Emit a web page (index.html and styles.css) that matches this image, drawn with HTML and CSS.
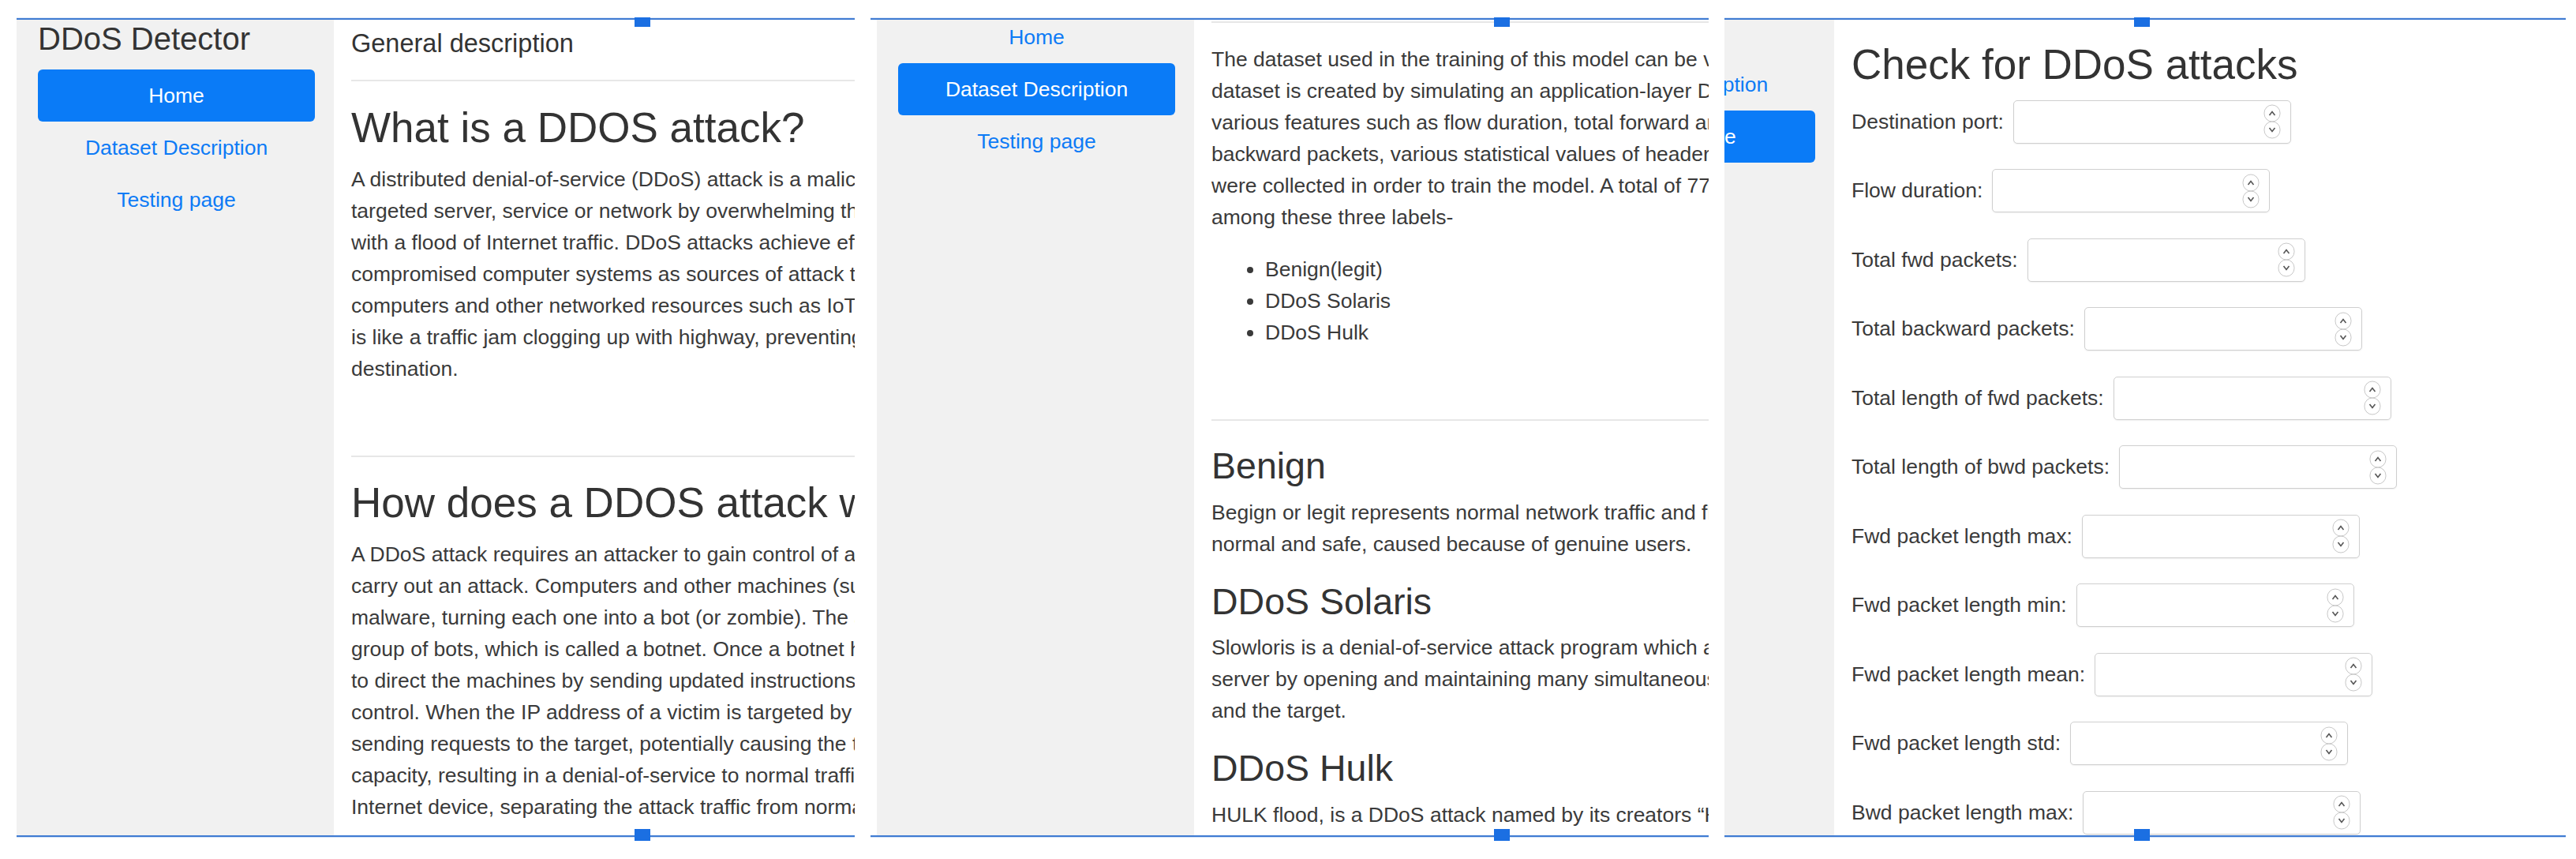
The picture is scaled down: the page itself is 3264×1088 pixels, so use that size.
FILE: index.html
```html
<!DOCTYPE html>
<html lang="en">
<head>
<meta charset="utf-8">
<title>DDoS Detector</title>
<link rel="stylesheet" href="styles.css">
</head>
<body>
<div class="canvas">

  <!-- Panel 1: Home -->
  <div class="frame f1">
    <div class="viewport">
      <div class="page">
        <aside class="sidebar">
          <div class="brand">DDoS Detector</div>
          <nav class="nav">
            <a class="active" href="#">Home</a>
            <a href="#">Dataset Description</a>
            <a href="#">Testing page</a>
          </nav>
        </aside>
        <main class="main">
          <h5 class="pagehead">General description</h5>
          <hr class="rule">
          <h2 class="title">What is a DDOS attack?</h2>
          <p>A distributed denial-of-service (DDoS) attack is a malicious attempt to disrupt the normal traffic of a<br>targeted server, service or network by overwhelming the target or its surrounding infrastructure<br>with a flood of Internet traffic. DDoS attacks achieve effectiveness by utilizing multiple<br>compromised computer systems as sources of attack traffic. Exploited machines can include<br>computers and other networked resources such as IoT devices. From a high level, a DDoS attack<br>is like a traffic jam clogging up with highway, preventing regular traffic from arriving at its desired<br>destination.</p>
          <hr class="rule sep">
          <h2 class="title">How does a DDOS attack work?</h2>
          <p>A DDoS attack requires an attacker to gain control of a network of online machines in order to<br>carry out an attack. Computers and other machines (such as IoT devices) are infected with<br>malware, turning each one into a bot (or zombie). The attacker then has remote control over the<br>group of bots, which is called a botnet. Once a botnet has been established, the attacker is able<br>to direct the machines by sending updated instructions to each bot via a method of remote<br>control. When the IP address of a victim is targeted by the botnet, each bot will respond by<br>sending requests to the target, potentially causing the targeted server or network to overflow<br>capacity, resulting in a denial-of-service to normal traffic. Because each bot is a legitimate<br>Internet device, separating the attack traffic from normal traffic can be difficult.</p>
        </main>
      </div>
    </div>
    <div class="handle h-top"></div>
    <div class="handle h-bot"></div>
  </div>

  <!-- Panel 2: Dataset Description -->
  <div class="frame f2">
    <div class="viewport">
      <div class="page">
        <aside class="sidebar">
          <div class="brand">DDoS Detector</div>
          <nav class="nav">
            <a href="#">Home</a>
            <a class="active" href="#">Dataset Description</a>
            <a href="#">Testing page</a>
          </nav>
        </aside>
        <main class="main">
          <h5 class="pagehead">Dataset description</h5>
          <hr class="rule">
          <p class="lead-p">The dataset used in the training of this model can be viewed here. This<br>dataset is created by simulating an application-layer DDoS attack on a web server, where<br>various features such as flow duration, total forward and<br>backward packets, various statistical values of header lengths and packet sizes<br>were collected in order to train the model. A total of 77 features are distributed<br>among these three labels-</p>
          <ul class="labels">
            <li>Benign(legit)</li>
            <li>DDoS Solaris</li>
            <li>DDoS Hulk</li>
          </ul>
          <hr class="rule sep sep-sub">
          <h3 class="sub">Benign</h3>
          <p>Begign or legit represents normal network traffic and flow of requests, which is considered<br>normal and safe, caused because of genuine users.</p>
          <h3 class="sub">DDoS Solaris</h3>
          <p>Slowloris is a denial-of-service attack program which allows an attacker to overwhelm a targeted<br>server by opening and maintaining many simultaneous HTTP connections between the attacker<br>and the target.</p>
          <h3 class="sub">DDoS Hulk</h3>
          <p>HULK flood, is a DDoS attack named by its creators “HTTP Unbearable Load King”.</p>
        </main>
      </div>
    </div>
    <div class="handle h-top"></div>
    <div class="handle h-bot"></div>
  </div>

  <!-- Panel 3: Testing page -->
  <div class="frame f3">
    <div class="viewport">
      <div class="page">
        <aside class="sidebar">
          <div class="brand">DDoS Detector</div>
          <nav class="nav">
            <a href="#">Home</a>
            <a href="#">Dataset Description</a>
            <a class="active" href="#">Testing page</a>
          </nav>
        </aside>
        <main class="main">
          <h5 class="pagehead">Testing page</h5>
          <hr class="rule">
          <h2 class="title">Check for DDoS attacks</h2>
          <form class="form">
            <div class="row"><label for="i1">Destination port:</label><span class="num"><input id="i1" type="text"><svg class="spin" viewBox="0 0 22 44" width="22" height="44"><rect x="1" y="1" width="20" height="21" rx="10" fill="none" stroke="#c8c8c8"/><rect x="1" y="22" width="20" height="21" rx="10" fill="none" stroke="#c8c8c8"/><path d="M7.5 14 L11 9.5 L14.5 14" fill="none" stroke="#555" stroke-width="1.6"/><path d="M7.5 30 L11 34.5 L14.5 30" fill="none" stroke="#555" stroke-width="1.6"/></svg></span></div>
            <div class="row"><label for="i2">Flow duration:</label><span class="num"><input id="i2" type="text"><svg class="spin" viewBox="0 0 22 44" width="22" height="44"><rect x="1" y="1" width="20" height="21" rx="10" fill="none" stroke="#c8c8c8"/><rect x="1" y="22" width="20" height="21" rx="10" fill="none" stroke="#c8c8c8"/><path d="M7.5 14 L11 9.5 L14.5 14" fill="none" stroke="#555" stroke-width="1.6"/><path d="M7.5 30 L11 34.5 L14.5 30" fill="none" stroke="#555" stroke-width="1.6"/></svg></span></div>
            <div class="row"><label for="i3">Total fwd packets:</label><span class="num"><input id="i3" type="text"><svg class="spin" viewBox="0 0 22 44" width="22" height="44"><rect x="1" y="1" width="20" height="21" rx="10" fill="none" stroke="#c8c8c8"/><rect x="1" y="22" width="20" height="21" rx="10" fill="none" stroke="#c8c8c8"/><path d="M7.5 14 L11 9.5 L14.5 14" fill="none" stroke="#555" stroke-width="1.6"/><path d="M7.5 30 L11 34.5 L14.5 30" fill="none" stroke="#555" stroke-width="1.6"/></svg></span></div>
            <div class="row"><label for="i4">Total backward packets:</label><span class="num"><input id="i4" type="text"><svg class="spin" viewBox="0 0 22 44" width="22" height="44"><rect x="1" y="1" width="20" height="21" rx="10" fill="none" stroke="#c8c8c8"/><rect x="1" y="22" width="20" height="21" rx="10" fill="none" stroke="#c8c8c8"/><path d="M7.5 14 L11 9.5 L14.5 14" fill="none" stroke="#555" stroke-width="1.6"/><path d="M7.5 30 L11 34.5 L14.5 30" fill="none" stroke="#555" stroke-width="1.6"/></svg></span></div>
            <div class="row"><label for="i5">Total length of fwd packets:</label><span class="num"><input id="i5" type="text"><svg class="spin" viewBox="0 0 22 44" width="22" height="44"><rect x="1" y="1" width="20" height="21" rx="10" fill="none" stroke="#c8c8c8"/><rect x="1" y="22" width="20" height="21" rx="10" fill="none" stroke="#c8c8c8"/><path d="M7.5 14 L11 9.5 L14.5 14" fill="none" stroke="#555" stroke-width="1.6"/><path d="M7.5 30 L11 34.5 L14.5 30" fill="none" stroke="#555" stroke-width="1.6"/></svg></span></div>
            <div class="row"><label for="i6">Total length of bwd packets:</label><span class="num"><input id="i6" type="text"><svg class="spin" viewBox="0 0 22 44" width="22" height="44"><rect x="1" y="1" width="20" height="21" rx="10" fill="none" stroke="#c8c8c8"/><rect x="1" y="22" width="20" height="21" rx="10" fill="none" stroke="#c8c8c8"/><path d="M7.5 14 L11 9.5 L14.5 14" fill="none" stroke="#555" stroke-width="1.6"/><path d="M7.5 30 L11 34.5 L14.5 30" fill="none" stroke="#555" stroke-width="1.6"/></svg></span></div>
            <div class="row"><label for="i7">Fwd packet length max:</label><span class="num"><input id="i7" type="text"><svg class="spin" viewBox="0 0 22 44" width="22" height="44"><rect x="1" y="1" width="20" height="21" rx="10" fill="none" stroke="#c8c8c8"/><rect x="1" y="22" width="20" height="21" rx="10" fill="none" stroke="#c8c8c8"/><path d="M7.5 14 L11 9.5 L14.5 14" fill="none" stroke="#555" stroke-width="1.6"/><path d="M7.5 30 L11 34.5 L14.5 30" fill="none" stroke="#555" stroke-width="1.6"/></svg></span></div>
            <div class="row"><label for="i8">Fwd packet length min:</label><span class="num"><input id="i8" type="text"><svg class="spin" viewBox="0 0 22 44" width="22" height="44"><rect x="1" y="1" width="20" height="21" rx="10" fill="none" stroke="#c8c8c8"/><rect x="1" y="22" width="20" height="21" rx="10" fill="none" stroke="#c8c8c8"/><path d="M7.5 14 L11 9.5 L14.5 14" fill="none" stroke="#555" stroke-width="1.6"/><path d="M7.5 30 L11 34.5 L14.5 30" fill="none" stroke="#555" stroke-width="1.6"/></svg></span></div>
            <div class="row"><label for="i9">Fwd packet length mean:</label><span class="num"><input id="i9" type="text"><svg class="spin" viewBox="0 0 22 44" width="22" height="44"><rect x="1" y="1" width="20" height="21" rx="10" fill="none" stroke="#c8c8c8"/><rect x="1" y="22" width="20" height="21" rx="10" fill="none" stroke="#c8c8c8"/><path d="M7.5 14 L11 9.5 L14.5 14" fill="none" stroke="#555" stroke-width="1.6"/><path d="M7.5 30 L11 34.5 L14.5 30" fill="none" stroke="#555" stroke-width="1.6"/></svg></span></div>
            <div class="row"><label for="i10">Fwd packet length std:</label><span class="num"><input id="i10" type="text"><svg class="spin" viewBox="0 0 22 44" width="22" height="44"><rect x="1" y="1" width="20" height="21" rx="10" fill="none" stroke="#c8c8c8"/><rect x="1" y="22" width="20" height="21" rx="10" fill="none" stroke="#c8c8c8"/><path d="M7.5 14 L11 9.5 L14.5 14" fill="none" stroke="#555" stroke-width="1.6"/><path d="M7.5 30 L11 34.5 L14.5 30" fill="none" stroke="#555" stroke-width="1.6"/></svg></span></div>
            <div class="row"><label for="i11">Bwd packet length max:</label><span class="num"><input id="i11" type="text"><svg class="spin" viewBox="0 0 22 44" width="22" height="44"><rect x="1" y="1" width="20" height="21" rx="10" fill="none" stroke="#c8c8c8"/><rect x="1" y="22" width="20" height="21" rx="10" fill="none" stroke="#c8c8c8"/><path d="M7.5 14 L11 9.5 L14.5 14" fill="none" stroke="#555" stroke-width="1.6"/><path d="M7.5 30 L11 34.5 L14.5 30" fill="none" stroke="#555" stroke-width="1.6"/></svg></span></div>
          </form>
        </main>
      </div>
    </div>
    <div class="handle h-top"></div>
    <div class="handle h-bot"></div>
  </div>

</div>
</body>
</html>
```

FILE: styles.css
```css
* { box-sizing: border-box; }

html, body {
  margin: 0;
  padding: 0;
  background: #ffffff;
}

body {
  width: 3264px;
  height: 1088px;
  overflow: hidden;
  font-family: "Liberation Sans", Arial, Helvetica, sans-serif;
  color: #333333;
}

.canvas {
  display: grid;
  grid-template-columns: 1062px 1062px 1066px;
  column-gap: 20px;
  padding: 23px 0 0 21px;
}

.frame {
  position: relative;
  height: 1037px;
  border-top: 2px solid #3f7bd2;
  border-bottom: 2px solid #3f7bd2;
  box-shadow: 0 1px 0 #cfe0f7, 0 -1px 0 #dce8f8;
}

.viewport {
  height: 100%;
  overflow: hidden;
}

.page {
  display: flex;
  width: 2400px;
  height: 1300px;
}

.f2 .page {
  margin-top: -74px;
  padding-left: 8px;
}

.f3 .page {
  margin-top: -80px;
  margin-left: -263px;
}

/* sidebar */
.sidebar {
  flex: 0 0 402px;
  background: #f1f1f1;
  padding: 0 24px 0 27px;
}

.brand {
  margin: 1px 0 0;
  font-size: 40px;
  line-height: 47px;
  color: #333333;
  white-space: nowrap;
}

.nav {
  margin-top: 15px;
  display: flex;
  flex-direction: column;
}

.nav a {
  display: block;
  text-align: center;
  font-size: 26.5px;
  line-height: 39px;
  padding: 13.5px 10px;
  color: #0d7bf6;
  text-decoration: none;
  border-radius: 6px;
  white-space: nowrap;
}

.nav a.active {
  background: #0a7bf7;
  color: #ffffff;
}

/* main column */
.main {
  flex: 1;
  padding-left: 22px;
}

.pagehead {
  margin: 11px 0 0;
  font-size: 32.5px;
  line-height: 38.4px;
  font-weight: 400;
  color: #333333;
  white-space: nowrap;
}

.rule {
  border: 0;
  border-top: 2px solid #e7e7e7;
  height: 0;
  margin: 26.6px 0 0;
}

.rule.sep {
  margin-top: 90px;
}

.rule.sep-sub {
  margin-bottom: 30px;
}

.title {
  margin: 27.5px 0 13.6px;
  font-size: 53px;
  line-height: 62.4px;
  font-weight: 400;
  color: #333333;
  white-space: nowrap;
}

.sub {
  margin: 25px 0 11px;
  font-size: 46.5px;
  line-height: 54.6px;
  font-weight: 400;
  color: #333333;
  white-space: nowrap;
}

p {
  margin: 0 0 26px;
  font-size: 26.5px;
  line-height: 40px;
  color: #3a3a3a;
  white-space: nowrap;
}

.lead-p {
  margin-top: 26px;
}

.labels {
  margin: 0 0 26px;
  padding-left: 68px;
  font-size: 26.5px;
  line-height: 40px;
  color: #3a3a3a;
  list-style: disc;
}

/* form */
.form {
  margin-top: 14px;
}

.row {
  display: flex;
  align-items: center;
  gap: 12px;
  height: 55px;
  margin-bottom: 32.5px;
}

.row label {
  font-size: 26.5px;
  color: #3a3a3a;
  white-space: nowrap;
}

.num {
  display: flex;
  align-items: center;
  flex: none;
  width: 352px;
  min-width: 352px;
  height: 55px;
  border: 1px solid #cfcfcf;
  border-radius: 5px;
  padding: 0 12px 0 10px;
  background: #ffffff;
  box-shadow: 0 1px 2px rgba(0, 0, 0, 0.06);
}

.num input {
  flex: 1 1 0;
  width: 0;
  min-width: 0;
  border: 0;
  padding: 0;
  outline: none;
  background: transparent;
  font-size: 26px;
  font-family: inherit;
}

.spin {
  flex: 0 0 22px;
}

/* selection handles */
.handle {
  position: absolute;
  width: 20px;
  background: #1b6fe2;
  z-index: 2;
}

.h-top {
  top: -3px;
  height: 12px;
}

.h-bot {
  bottom: -7px;
  height: 15px;
}

.f1 .handle { left: 783px; }
.f2 .handle { left: 790px; }
.f3 .handle { left: 519px; }
```
